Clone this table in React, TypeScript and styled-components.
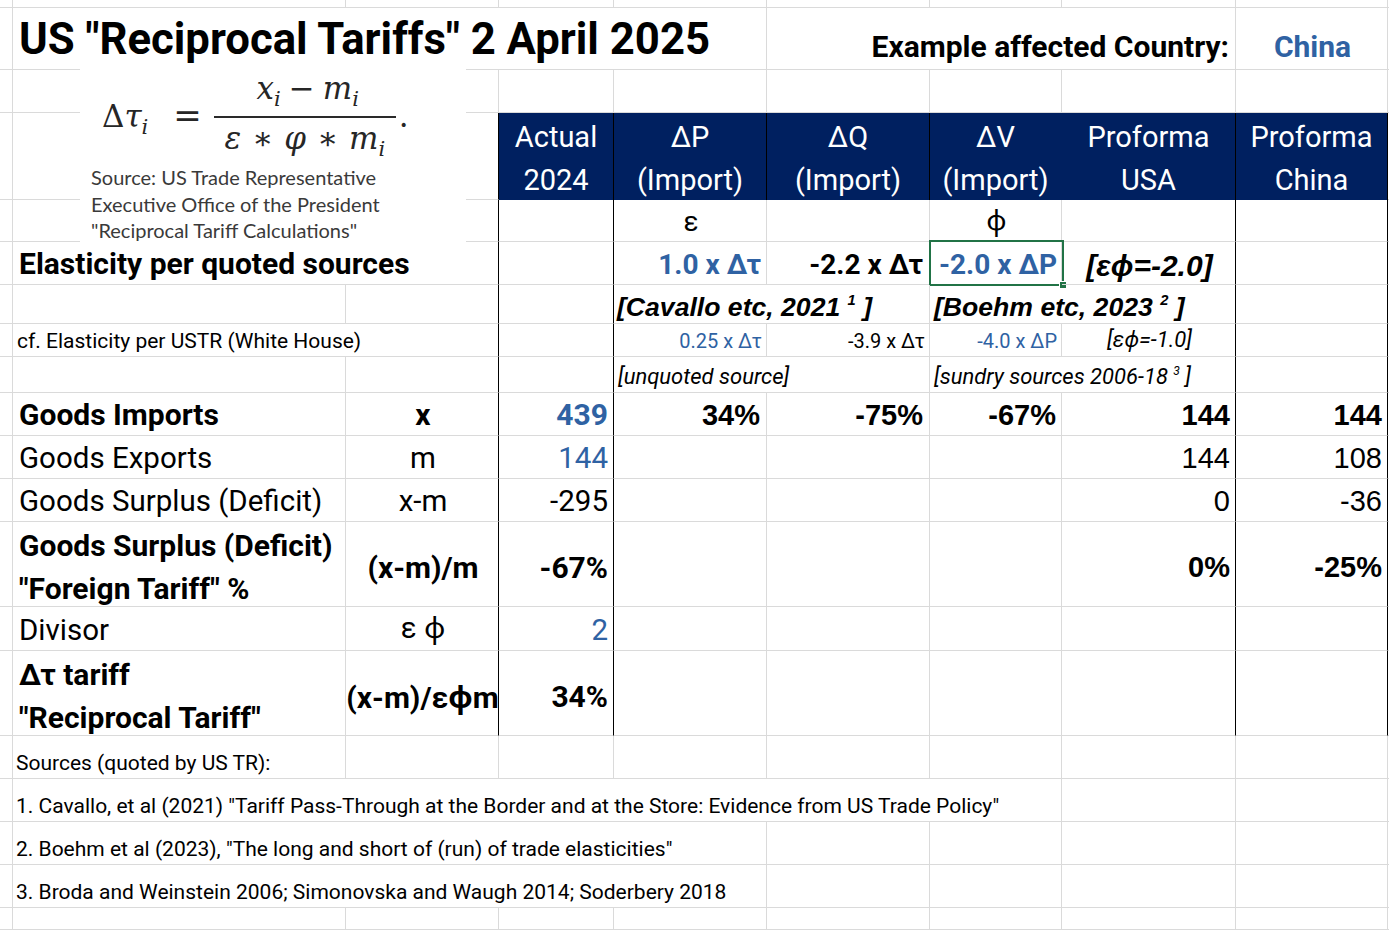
import React from 'react';
import styled, { createGlobalStyle } from 'styled-components';

const GRID = '#dadada';
const NAVY = '#002060';
const BLUE = '#2F62A3';
const GREEN = '#217346';

const APTOS = `Roboto, "Noto Sans", "Liberation Sans", sans-serif`;
const ARIAL = `"Liberation Sans", Arial, sans-serif`;
const SERIF = `"DejaVu Serif", "Liberation Serif", serif`;
const CALIBRI = `Lato, "Open Sans", sans-serif`;

const Global = createGlobalStyle`
  html, body { margin: 0; padding: 0; background: #fff; }
  body { font-family: ${APTOS}; color: #000; }
  * { box-sizing: border-box; }
`;

const Sheet = styled.div`
  position: relative;
  display: grid;
  grid-template-columns: 11px 335px 153px 115px 153px 163px 132px 174px 152px 1fr;
  grid-template-rows: 8px 62px 43px 87px 42px 43px 39px 33px 36px 43px 43px 43px 85px 44px 85px 43px 43px 43px 43px 22px;
  width: 1389px;
  height: 930px;
  overflow: hidden;
`;

type Edge = 'grid' | 'black' | 'none';
const edgeColor = (e?: Edge) => (e === 'black' ? '#000' : e === 'none' ? 'transparent' : GRID);

interface CellProps {
  $span?: number;
  $align?: 'left' | 'center' | 'right';
  $valign?: 'bottom' | 'center';
  $right?: Edge;
  $bottom?: Edge;
  $pl?: number;
  $pr?: number;
  $pb?: number;
  $pt?: number;
}

const Cell = styled.div<CellProps>`
  grid-column: span ${(p) => p.$span ?? 1};
  position: relative;
  display: flex;
  align-items: ${(p) => (p.$valign === 'center' ? 'center' : 'flex-end')};
  justify-content: ${(p) =>
    p.$align === 'right' ? 'flex-end' : p.$align === 'center' ? 'center' : 'flex-start'};
  padding: ${(p) => p.$pt ?? 0}px ${(p) => p.$pr ?? 5}px ${(p) => p.$pb ?? 3}px ${(p) => p.$pl ?? 7}px;
  border-right: 1px solid ${(p) => edgeColor(p.$right)};
  border-bottom: 1px solid ${(p) => edgeColor(p.$bottom)};
  white-space: nowrap;
  min-width: 0;
`;

const HeadCell = styled.div<{ $rule?: boolean }>`
  display: flex;
  flex-direction: column;
  align-items: center;
  justify-content: center;
  padding-top: 4px;
  background: ${NAVY};
  border-right: 1px solid ${(p) => (p.$rule ? '#000' : NAVY)};
  color: #fff;
  font: 400 29px/43px ${APTOS};
  white-space: nowrap;
`;

const Title = styled.span`
  font: 700 43.7px ${APTOS};
`;

const Label = styled.span<{ $bold?: boolean; $color?: string; $size?: number }>`
  font-family: ${APTOS};
  font-size: ${(p) => p.$size ?? (p.$bold ? 30 : 29.5)}px;
  font-weight: ${(p) => (p.$bold ? 700 : 400)};
  color: ${(p) => p.$color ?? '#000'};
`;

const TwoLine = styled(Label)`
  display: block;
  line-height: 43px;
`;

const Small = styled.span<{ $color?: string; $italic?: boolean; $size?: number }>`
  font-family: ${APTOS};
  font-size: ${(p) => p.$size ?? 21}px;
  font-style: ${(p) => (p.$italic ? 'italic' : 'normal')};
  color: ${(p) => p.$color ?? '#000'};
`;

const Num = styled.span<{ $bold?: boolean }>`
  font-family: ${ARIAL};
  font-size: 29px;
  font-weight: ${(p) => (p.$bold ? 700 : 400)};
`;

const Cite = styled.span<{ $size?: number }>`
  font-family: ${ARIAL};
  font-size: ${(p) => p.$size ?? 26.6}px;
  font-weight: 700;
  font-style: italic;
  line-height: 1.05;
`;

const Sup = styled.span`
  font-size: 0.55em;
  position: relative;
  top: -0.75em;
`;

const Selection = styled.div`
  position: absolute;
  left: -1px;
  top: -2px;
  right: -3px;
  bottom: -2px;
  border: 2px solid ${GREEN};
  pointer-events: none;
`;

const Handle = styled.div`
  position: absolute;
  right: -5px;
  bottom: -5px;
  width: 8px;
  height: 8px;
  background: ${GREEN};
  border: 1px solid #fff;
`;

/* Embedded picture of the USTR formula */
const Picture = styled.div`
  position: absolute;
  left: 80px;
  top: 65px;
  width: 386px;
  height: 179px;
  background: #fff;
  z-index: 2;
  display: flex;
  flex-direction: column;
`;

const Formula = styled.div`
  display: flex;
  align-items: flex-start;
  height: 99px;
  padding-left: 22px;
  font-family: ${SERIF};
  font-size: 31px;
  line-height: 1;
  color: #262626;
`;

const Lhs = styled.span`
  margin-top: 36px;
  display: inline-flex;
  align-items: baseline;
`;

const It = styled.i`
  font-style: italic;
`;

const Sub = styled.i`
  font-style: italic;
  font-size: 0.68em;
  position: relative;
  top: 0.32em;
`;

const Eq = styled.span`
  font-size: 34px;
  margin: 33px 12px 0 25px;
`;

const Frac = styled.span`
  display: inline-flex;
  flex-direction: column;
  align-items: center;
  width: 182px;
  margin-top: 8px;
`;

const FracNum = styled.span`
  margin-bottom: 12px;
  padding-left: 6px;
`;

const FracBar = styled.span`
  align-self: stretch;
  height: 2px;
  background: #2a2a2a;
`;

const FracDen = styled.span`
  margin-top: 5px;
`;

const Op = styled.span<{ $gap?: number }>`
  margin: 0 ${(p) => p.$gap ?? 8}px;
  font-style: normal;
`;

const Dot = styled.span`
  margin-top: 36px;
  margin-left: 3px;
`;

const SourceNote = styled.div`
  padding-left: 11px;
  font-family: ${CALIBRI};
  font-size: 20px;
  line-height: 26.5px;
  color: #3a3a3a;
`;

const B: Edge = 'black';
const N: Edge = 'none';

export default function App() {
  return (
    <>
      <Global />
      <Sheet>
        {/* row 0 */}
        <Cell /><Cell /><Cell /><Cell /><Cell /><Cell /><Cell /><Cell /><Cell /><Cell $right={N} />

        {/* row 1: title */}
        <Cell />
        <Cell $span={4} $pl={8} $pb={4}>
          <Title>US "Reciprocal Tariffs" 2 April 2025</Title>
        </Cell>
        <Cell $span={3} $align="right" $pr={6} $pb={5}>
          <Label $bold>Example affected Country:</Label>
        </Cell>
        <Cell $align="center" $pb={5}>
          <Label $bold $color={BLUE}>China</Label>
        </Cell>
        <Cell $right={N} />

        {/* row 2 */}
        <Cell /><Cell /><Cell /><Cell /><Cell /><Cell /><Cell /><Cell /><Cell /><Cell $right={N} />

        {/* row 3: header */}
        <Cell /><Cell /><Cell $right={B} />
        <HeadCell $rule><span>Actual</span><span>2024</span></HeadCell>
        <HeadCell $rule><span>ΔP</span><span>(Import)</span></HeadCell>
        <HeadCell $rule><span>ΔQ</span><span>(Import)</span></HeadCell>
        <HeadCell><span>ΔV</span><span>(Import)</span></HeadCell>
        <HeadCell $rule><span>Proforma</span><span>USA</span></HeadCell>
        <HeadCell $rule><span>Proforma</span><span>China</span></HeadCell>
        <Cell $right={N} />

        {/* row 4: symbols */}
        <Cell /><Cell /><Cell $right={B} /><Cell $right={B} />
        <Cell $align="center"><Label $size={28}>ε</Label></Cell>
        <Cell />
        <Cell $align="center"><Label $size={28}>ϕ</Label></Cell>
        <Cell $right={B} /><Cell $right={B} />
        <Cell $right={N} />

        {/* row 5: elasticity per quoted sources */}
        <Cell />
        <Cell $span={2} $right={B} $pl={8}>
          <Label $bold>Elasticity per quoted sources</Label>
        </Cell>
        <Cell $right={B} />
        <Cell $align="right" $pr={5}><Label $bold $size={28} $color={BLUE}>1.0 x Δτ</Label></Cell>
        <Cell $align="right" $pr={6}><Label $bold $size={28}>-2.2 x Δτ</Label></Cell>
        <Cell $align="right" $pr={4}>
          <Label $bold $size={28} $color={BLUE}>-2.0 x ΔP</Label>
          <Selection><Handle /></Selection>
        </Cell>
        <Cell $align="center" $right={B}><Cite $size={30}>[εϕ=-2.0]</Cite></Cell>
        <Cell $right={B} />
        <Cell $right={N} />

        {/* row 6: citations */}
        <Cell /><Cell /><Cell $right={B} /><Cell $right={B} />
        <Cell $span={2} $pl={3} $pb={1}>
          <Cite>[Cavallo etc, 2021 <Sup>1</Sup> ]</Cite>
        </Cell>
        <Cell $span={2} $right={B} $pl={4} $pb={1}>
          <Cite>[Boehm etc, 2023 <Sup>2</Sup> ]</Cite>
        </Cell>
        <Cell $right={B} />
        <Cell $right={N} />

        {/* row 7: USTR elasticity */}
        <Cell />
        <Cell $span={2} $right={B} $pl={6}>
          <Small>cf. Elasticity per USTR (White House)</Small>
        </Cell>
        <Cell $right={B} />
        <Cell $align="right" $pr={4}><Small $size={20} $color={BLUE}>0.25 x Δτ</Small></Cell>
        <Cell $align="right" $pr={4}><Small $size={20}>-3.9 x Δτ</Small></Cell>
        <Cell $align="right" $pr={4}><Small $size={20} $color={BLUE}>-4.0 x ΔP</Small></Cell>
        <Cell $align="center" $right={B}><Small $italic $size={22}>[εϕ=-1.0]</Small></Cell>
        <Cell $right={B} />
        <Cell $right={N} />

        {/* row 8: notes */}
        <Cell /><Cell /><Cell $right={B} /><Cell $right={B} />
        <Cell $span={2} $pl={4}><Small $italic $size={22}>[unquoted source]</Small></Cell>
        <Cell $span={2} $right={B} $pl={4}>
          <Small $italic $size={22}>[sundry sources 2006-18 <Sup>3</Sup> ]</Small>
        </Cell>
        <Cell $right={B} />
        <Cell $right={N} />

        {/* row 9: goods imports */}
        <Cell />
        <Cell $pl={8}><Label $bold>Goods Imports</Label></Cell>
        <Cell $align="center" $right={B}><Label $bold>x</Label></Cell>
        <Cell $align="right" $right={B}><Label $bold $color={BLUE}>439</Label></Cell>
        <Cell $align="right" $pr={6}><Num $bold>34%</Num></Cell>
        <Cell $align="right" $pr={6}><Num $bold>-75%</Num></Cell>
        <Cell $align="right"><Num $bold>-67%</Num></Cell>
        <Cell $align="right" $right={B}><Num $bold>144</Num></Cell>
        <Cell $align="right" $right={B}><Num $bold>144</Num></Cell>
        <Cell $right={N} />

        {/* row 10: goods exports */}
        <Cell />
        <Cell $pl={8}><Label>Goods Exports</Label></Cell>
        <Cell $align="center" $right={B}><Label>m</Label></Cell>
        <Cell $align="right" $right={B}><Label $color={BLUE}>144</Label></Cell>
        <Cell /><Cell /><Cell />
        <Cell $align="right" $right={B}><Num>144</Num></Cell>
        <Cell $align="right" $right={B}><Num>108</Num></Cell>
        <Cell $right={N} />

        {/* row 11: surplus */}
        <Cell />
        <Cell $pl={8}><Label>Goods Surplus (Deficit)</Label></Cell>
        <Cell $align="center" $right={B}><Label>x-m</Label></Cell>
        <Cell $align="right" $right={B}><Label>-295</Label></Cell>
        <Cell /><Cell /><Cell />
        <Cell $align="right" $right={B}><Num>0</Num></Cell>
        <Cell $align="right" $right={B}><Num>-36</Num></Cell>
        <Cell $right={N} />

        {/* row 12: foreign tariff */}
        <Cell />
        <Cell $pl={8} $valign="center" $pb={0} $pt={6}>
          <div>
            <TwoLine $bold>Goods Surplus (Deficit)</TwoLine>
            <TwoLine $bold>"Foreign Tariff" %</TwoLine>
          </div>
        </Cell>
        <Cell $align="center" $valign="center" $right={B} $pt={6} $pb={0}><Label $bold>(x-m)/m</Label></Cell>
        <Cell $align="right" $valign="center" $right={B} $pt={6} $pb={0}><Label $bold>-67%</Label></Cell>
        <Cell /><Cell /><Cell />
        <Cell $align="right" $valign="center" $right={B} $pt={6} $pb={0}><Num $bold>0%</Num></Cell>
        <Cell $align="right" $valign="center" $right={B} $pt={6} $pb={0}><Num $bold>-25%</Num></Cell>
        <Cell $right={N} />

        {/* row 13: divisor */}
        <Cell />
        <Cell $pl={8}><Label>Divisor</Label></Cell>
        <Cell $align="center" $right={B}><Label>ε ϕ</Label></Cell>
        <Cell $align="right" $right={B}><Label $color={BLUE}>2</Label></Cell>
        <Cell /><Cell /><Cell />
        <Cell $right={B} /><Cell $right={B} />
        <Cell $right={N} />

        {/* row 14: reciprocal tariff */}
        <Cell />
        <Cell $pl={8} $valign="center" $pb={0} $pt={6}>
          <div>
            <TwoLine $bold>Δτ tariff</TwoLine>
            <TwoLine $bold>"Reciprocal Tariff"</TwoLine>
          </div>
        </Cell>
        <Cell $align="center" $valign="center" $right={B} $pl={2} $pr={1} $pt={6} $pb={0}>
          <Label $bold>(x-m)/εϕm</Label>
        </Cell>
        <Cell $align="right" $valign="center" $right={B} $pt={6} $pb={0}><Label $bold>34%</Label></Cell>
        <Cell /><Cell /><Cell />
        <Cell $right={B} /><Cell $right={B} />
        <Cell $right={N} />

        {/* row 15: sources heading */}
        <Cell />
        <Cell $pl={5}><Small>Sources (quoted by US TR):</Small></Cell>
        <Cell /><Cell /><Cell /><Cell /><Cell /><Cell /><Cell />
        <Cell $right={N} />

        {/* row 16 */}
        <Cell />
        <Cell $span={6} $pl={5}>
          <Small>1. Cavallo, et al (2021) "Tariff Pass-Through at the Border and at the Store: Evidence from US Trade Policy"</Small>
        </Cell>
        <Cell /><Cell />
        <Cell $right={N} />

        {/* row 17 */}
        <Cell />
        <Cell $span={4} $pl={5}>
          <Small>2. Boehm et al (2023), "The long and short of (run) of trade elasticities"</Small>
        </Cell>
        <Cell /><Cell /><Cell /><Cell />
        <Cell $right={N} />

        {/* row 18 */}
        <Cell />
        <Cell $span={4} $pl={5}>
          <Small>3. Broda and Weinstein 2006; Simonovska and Waugh 2014; Soderbery 2018</Small>
        </Cell>
        <Cell /><Cell /><Cell /><Cell />
        <Cell $right={N} />

        {/* row 19 */}
        <Cell /><Cell /><Cell /><Cell /><Cell /><Cell /><Cell /><Cell /><Cell /><Cell $right={N} />

        <Picture>
          <Formula>
            <Lhs>
              <span>Δ</span>
              <It>τ</It>
              <Sub>i</Sub>
            </Lhs>
            <Eq>=</Eq>
            <Frac>
              <FracNum>
                <It>x</It><Sub>i</Sub>
                <Op>−</Op>
                <It>m</It><Sub>i</Sub>
              </FracNum>
              <FracBar />
              <FracDen>
                <It>ε</It>
                <Op $gap={11}>∗</Op>
                <It>φ</It>
                <Op $gap={11}>∗</Op>
                <It>m</It><Sub>i</Sub>
              </FracDen>
            </Frac>
            <Dot>.</Dot>
          </Formula>
          <SourceNote>
            <div>Source: US Trade Representative</div>
            <div>Executive Office of the President</div>
            <div>"Reciprocal Tariff Calculations"</div>
          </SourceNote>
        </Picture>
      </Sheet>
    </>
  );
}
